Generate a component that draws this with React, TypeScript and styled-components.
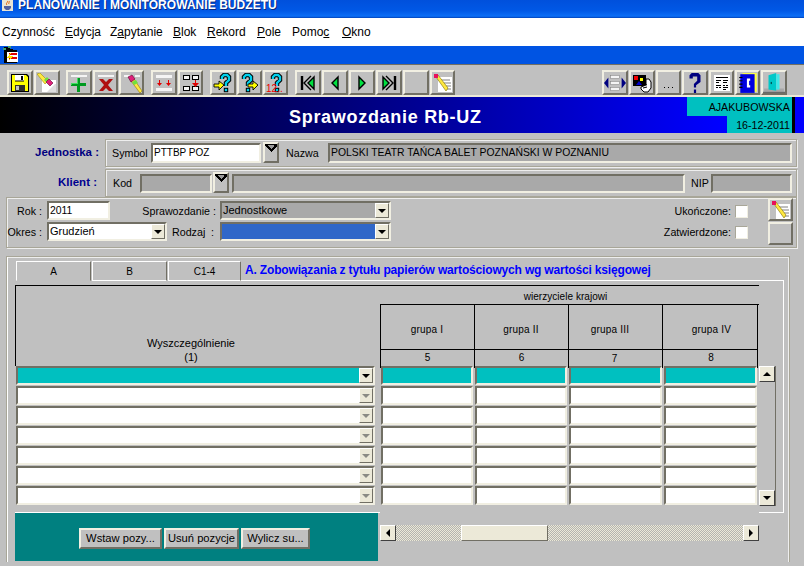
import React from 'react';
import styled, { createGlobalStyle } from 'styled-components';

const GlobalStyle = createGlobalStyle`
	html, body {
		margin: 0;
		padding: 0;
		height: 566px;
		overflow: hidden;
		background: #c0c0c0;
		font-family: "Liberation Sans", Arial, sans-serif;
		font-size: 12px;
		color: #000;
	}
`;

const raised = `
	border-style: solid;
	border-width: 2px;
	border-color: #f1efe2 #716f64 #716f64 #f1efe2;
`;
const sunken = `
	border-style: solid;
	border-width: 2px;
	border-color: #716f64 #f1efe2 #f1efe2 #716f64;
`;

const Screen = styled.div`
	width: 804px;
	height: 566px;
	overflow: hidden;
	display: flex;
	flex-direction: column;
	box-sizing: border-box;
`;

const TitleBar = styled.div`
	height: 18px;
	flex: none;
	display: flex;
	align-items: flex-start;
	padding-left: 2px;
	gap: 5px;
	box-sizing: border-box;
	background: linear-gradient(#0050dc 0, #0058e6 60%, #0b6ef6 90%, #0040b8 100%);
`;
const TitleText = styled.span`
	color: #fff;
	font-weight: bold;
	font-size: 12px;
	line-height: 11px;
	letter-spacing: 0.05px;
	text-shadow: 1px 1px #0a2a80;
`;

const MenuBar = styled.div`
	height: 28px;
	flex: none;
	background: #fff;
	display: flex;
	align-items: center;
	padding-left: 2px;
	box-sizing: border-box;
`;
const MenuItem = styled.span<{ $w: number }>`
	width: ${(p) => p.$w}px;
	flex: none;
	font-size: 12px;
	u { text-underline-offset: 1px; }
`;

const BlueStrip = styled.div`
	height: 18px;
	flex: none;
	background: #0054e3;
	padding-left: 2px;
	box-sizing: border-box;
`;

const Toolbar = styled.div`
	height: 33px;
	flex: none;
	box-sizing: border-box;
	display: flex;
	align-items: flex-start;
	padding: 5px 17px 0 7px;
	border-top: 1px solid #716f64;
	border-bottom: 2px solid #ece9d8;
	background: #c0c0c0;
`;
const ToolGroup = styled.div<{ $after?: number; $push?: boolean }>`
	display: flex;
	gap: 1px;
	margin-right: ${(p) => p.$after ?? 0}px;
	margin-left: ${(p) => (p.$push ? 'auto' : '0')};
`;
const ToolButton = styled.div<{ $w: number }>`
	width: ${(p) => p.$w}px;
	height: 25px;
	box-sizing: border-box;
	${raised}
	background: #c0c0c0;
	display: flex;
	align-items: center;
	justify-content: center;
	overflow: hidden;
	svg { flex: none; }
`;

const Banner = styled.div`
	height: 36px;
	flex: none;
	display: flex;
	background: linear-gradient(90deg, #000 0, #0000ff 720px);
`;
const BannerTitle = styled.div`
	padding: 9px 0 0 289px;
	color: #fff;
	font-weight: bold;
	font-size: 18px;
	line-height: 22px;
	letter-spacing: 0.7px;
`;
const BannerInfo = styled.div`
	margin: 0 9px 0 auto;
	display: flex;
	flex-direction: column;
	align-items: flex-end;
	border-right: 3px solid #000;
`;
const InfoLine = styled.div<{ $w: number; $h: number }>`
	width: ${(p) => p.$w}px;
	height: ${(p) => p.$h}px;
	box-sizing: border-box;
	background: #00c0c0;
	text-align: right;
	padding-right: 2px;
	font-size: 10.7px;
	line-height: ${(p) => p.$h + 1}px;
`;

const FormRow = styled.div<{ $top: number; $h: number }>`
	margin-top: ${(p) => p.$top}px;
	height: ${(p) => p.$h}px;
	flex: none;
	display: flex;
`;
const RowLabel = styled.div<{ $pr: number; $c: string }>`
	width: 105px;
	flex: none;
	box-sizing: border-box;
	padding-right: ${(p) => p.$pr}px;
	text-align: right;
	font-weight: bold;
	font-size: 11.5px;
	line-height: 27px;
	color: ${(p) => p.$c};
`;
const Etched = styled.div`
	box-sizing: border-box;
	border: 1px solid #a8a698;
	box-shadow: inset 1px 1px #eeeeee, 1px 1px #eeeeee;
`;
const RowPanel = styled(Etched)`
	width: 692px;
	flex: none;
	display: flex;
	align-items: center;
	padding-right: 4px;
`;
const Caption = styled.span<{ $w?: number; $ml?: number; $right?: boolean }>`
	flex: none;
	width: ${(p) => (p.$w ? `${p.$w}px` : 'auto')};
	margin-left: ${(p) => p.$ml ?? 0}px;
	text-align: ${(p) => (p.$right ? 'right' : 'left')};
	font-size: 10.7px;
	white-space: nowrap;
`;
const Field = styled.div<{ $w: number; $h?: number; $bg?: string; $ml?: number; $fs?: number }>`
	width: ${(p) => p.$w}px;
	height: ${(p) => p.$h ?? 20}px;
	margin-left: ${(p) => p.$ml ?? 0}px;
	flex: none;
	box-sizing: border-box;
	${sunken}
	background: ${(p) => p.$bg ?? '#a9a9a9'};
	font-size: ${(p) => p.$fs ?? 10.4}px;
	line-height: 15px;
	padding-left: 1px;
	white-space: nowrap;
	overflow: hidden;
`;
const ListButton = styled.div<{ $ml: number; $mt: number }>`
	width: 16px;
	height: 21px;
	margin-left: ${(p) => p.$ml}px;
	margin-top: ${(p) => p.$mt}px;
	flex: none;
	box-sizing: border-box;
	${raised}
	background: #c0c0c0;
	svg { display: block; }
`;

const Filters = styled(Etched)`
	margin: 0 7px 0 6px;
	width: 791px;
	height: 51px;
	flex: none;
	display: flex;
	padding: 3px 3px 0 0;
`;
const FilterLines = styled.div`
	display: flex;
	flex-direction: column;
	gap: 2px;
`;
const FilterLine = styled.div`
	display: flex;
	align-items: center;
	height: 19px;
`;
const Combo = styled.div<{ $w: number; $bg: string; $ml?: number }>`
	width: ${(p) => p.$w}px;
	height: 19px;
	margin-left: ${(p) => p.$ml ?? 0}px;
	flex: none;
	box-sizing: border-box;
	${sunken}
	background: ${(p) => p.$bg};
	display: flex;
	justify-content: space-between;
	font-size: 11px;
	line-height: 15px;
	padding-left: 1px;
`;
const Arrow = styled.div<{ $off?: boolean; $up?: boolean }>`
	width: 14px;
	height: 15px;
	flex: none;
	box-sizing: border-box;
	border-style: solid;
	border-width: 1px;
	border-color: #fff #716f64 #716f64 #fff;
	background: #ece9d8;
	display: flex;
	align-items: center;
	justify-content: center;
	&::after {
		content: '';
		border-left: 4px solid transparent;
		border-right: 4px solid transparent;
		border-top: ${(p) => (p.$up ? '0' : `4px solid ${p.$off ? '#8a8a84' : '#000'}`)};
		border-bottom: ${(p) => (p.$up ? '4px solid #000' : '0')};
	}
`;
const Checks = styled.div`
	margin-left: auto;
	display: flex;
	flex-direction: column;
	align-items: flex-end;
	padding: 3px 20px 0 0;
	gap: 7px;
`;
const CheckLine = styled.div`
	display: flex;
	align-items: center;
	gap: 4px;
	height: 14px;
	font-size: 10.7px;
`;
const CheckBox = styled.div`
	width: 13px;
	height: 13px;
	box-sizing: border-box;
	border: 1px solid;
	border-color: #a8a698 #f1efe2 #f1efe2 #a8a698;
	background: #fff;
`;
const SideButtons = styled.div`
	display: flex;
	flex-direction: column;
	gap: 1px;
	margin-top: -3px;
`;
const SideButton = styled(ToolButton)`
	height: 23px;
`;

const TabPanel = styled(Etched)`
	margin: 8px 0 0 6px;
	width: 784px;
	height: 306px;
	flex: none;
	padding: 4px 0 0 8px;
	box-shadow: inset 1px 0 #fff, inset -1px 0 #eeeeee, inset 0 1px #eeeeee;
	border-bottom: 0;
`;
const TabsRow = styled.div`
	display: flex;
	height: 20px;
	width: 769px;
`;
const TabHead = styled.div<{ $w: number; $on?: boolean }>`
	width: ${(p) => p.$w}px;
	margin-left: 1px;
	flex: none;
	box-sizing: border-box;
	border-top: 1px solid #fff;
	border-left: 1px solid #fff;
	border-right: 1px solid #716f64;
	border-bottom: 1px solid ${(p) => (p.$on ? 'transparent' : '#fff')};
	text-align: center;
	font-size: 10px;
	line-height: 20px;
`;
const TabTitle = styled.div`
	flex: 1;
	padding-left: 4px;
	box-sizing: border-box;
	border-bottom: 1px solid #fff;
	color: #0000ff;
	font-weight: bold;
	font-size: 12px;
	line-height: 18px;
	letter-spacing: -0.17px;
	white-space: nowrap;
`;
const TabPage = styled.div`
	width: 769px;
	height: 231px;
	box-sizing: border-box;
	padding-top: 4px;
	border-right: 1px solid #fff;
`;
const TableHead = styled.div`
	width: 744px;
	height: 81px;
	display: flex;
	box-sizing: border-box;
	border-top: 1px solid #000;
	border-left: 1px solid #000;
`;
const FirstHead = styled.div`
	width: 364px;
	flex: none;
	box-sizing: border-box;
	padding: 50px 14px 0 0;
	text-align: center;
	font-size: 11px;
	line-height: 14px;
`;
const GroupHead = styled.div`
	flex: 1;
	display: flex;
	flex-direction: column;
`;
const GroupTitle = styled.div`
	height: 19px;
	box-sizing: border-box;
	border-bottom: 1px solid #000;
	padding-right: 8px;
	text-align: center;
	font-size: 10px;
	line-height: 21px;
	letter-spacing: 0.05px;
`;
const GroupColumns = styled.div`
	display: flex;
	flex: 1;
`;
const GroupColumn = styled.div<{ $w: number }>`
	width: ${(p) => p.$w}px;
	flex: none;
	box-sizing: border-box;
	border-left: 1px solid #000;
	display: flex;
	flex-direction: column;
	&:last-child {
		border-right: 1px solid #000;
	}
`;
const GroupName = styled.div<{ $shift: number }>`
	height: 45px;
	box-sizing: border-box;
	border-bottom: 1px solid #000;
	margin-right: -1px;
	text-align: center;
	font-size: 10px;
	line-height: 49px;
	letter-spacing: 0.2px;
	padding-left: ${(p) => Math.max(p.$shift, 0)}px;
	padding-right: ${(p) => Math.max(-p.$shift, 0)}px;
`;
const GroupNum = styled.div<{ $lh: number; $shift: number }>`
	text-align: center;
	font-size: 10px;
	line-height: ${(p) => p.$lh}px;
	padding-left: ${(p) => Math.max(p.$shift, 0)}px;
	padding-right: ${(p) => Math.max(-p.$shift, 0)}px;
`;
const TableBody = styled.div`
	display: flex;
	padding-left: 1px;
`;
const Rows = styled.div`
	display: flex;
	flex-direction: column;
`;
const DataRow = styled.div`
	height: 20px;
	display: grid;
	grid-template-columns: 363px 92px 92px 93px 93px;
	column-gap: 2px;
	& > :first-child {
		width: 359px;
	}
`;
const Cell = styled.div<{ $on: boolean }>`
	height: 19px;
	box-sizing: border-box;
	${sunken}
	background: ${(p) => (p.$on ? '#00c0c0' : '#fff')};
	display: flex;
	justify-content: flex-end;
`;
const VScroll = styled.div`
	margin-left: 2px;
	width: 17px;
	height: 140px;
	box-sizing: border-box;
	border-right: 1px solid #716f64;
	display: flex;
	flex-direction: column;
	justify-content: space-between;
`;
const ScrollButton = styled(Arrow)`
	width: 16px;
	height: 16px;
	border-color: #fff #404040 #404040 #fff;
`;
const RuleLine = styled.div`
	display: flex;
	height: 1px;
`;
const Rule = styled.div<{ $w: number; $ml?: number }>`
	width: ${(p) => p.$w}px;
	margin-left: ${(p) => p.$ml ?? 0}px;
	background: #fff;
`;
const Footer = styled.div`
	display: flex;
`;
const ActionBar = styled.div`
	width: 363px;
	height: 48px;
	flex: none;
	background: #008080;
	display: flex;
	gap: 2px;
	padding: 15px 0 0 64px;
	box-sizing: border-box;
`;
const ActionButton = styled.div<{ $w: number }>`
	width: ${(p) => p.$w}px;
	height: 21px;
	box-sizing: border-box;
	${raised}
	background: #c0c0c0;
	text-align: center;
	font-size: 11.2px;
	line-height: 17px;
	white-space: nowrap;
`;
const HScroll = styled.div`
	margin: 12px 0 0 2px;
	width: 379px;
	height: 16px;
	display: flex;
	background: repeating-conic-gradient(#ece9d8 0 25%, #b4b4b0 0 50%) 0 0 / 2px 2px;
`;
const SideArrow = styled.div<{ $left?: boolean }>`
	width: 16px;
	height: 16px;
	flex: none;
	box-sizing: border-box;
	border: 1px solid;
	border-color: #fff #404040 #404040 #fff;
	background: #ece9d8;
	display: flex;
	align-items: center;
	justify-content: center;
	&::after {
		content: '';
		border-top: 4px solid transparent;
		border-bottom: 4px solid transparent;
		border-left: ${(p) => (p.$left ? '0' : '4px solid #000')};
		border-right: ${(p) => (p.$left ? '4px solid #000' : '0')};
	}
`;
const Thumb = styled.div`
	width: 87px;
	margin-left: 65px;
	margin-right: auto;
	box-sizing: border-box;
	border: 1px solid;
	border-color: #fff #716f64 #716f64 #fff;
	background: #ece9d8;
`;

// toolbar drawings, all on the same 20x20 grid
const Ico = ({ children, size = 20 }: { children: React.ReactNode; size?: number }) => (
	<svg width={size} height={size} viewBox="0 0 20 20">
		{children}
	</svg>
);

const Floppy = () => (
	<Ico>
		<path d="M1 1h16l2 2v16H1z" fill="#000" />
		<path d="M2 2h14l2 2v14H2z" fill="#ffff00" />
		<rect x="5" y="2" width="9" height="6" fill="#fff" />
		<rect x="11" y="3" width="2" height="4" fill="#000" />
		<path d="M5 8h9" stroke="#000" />
		<rect x="5" y="12" width="10" height="6" fill="#303030" />
		<rect x="6" y="13" width="3" height="4" fill="#c0c0c0" />
	</Ico>
);
const ClearForm = () => (
	<Ico>
		<rect x="5" y="7" width="14" height="12" fill="#fff" />
		<path d="M18 11l-8 8h9v-8z" fill="#dedede" />
		<path d="M0 1l3-1 8 8-3 3z" fill="#ffe840" stroke="#a09000" strokeWidth="0.6" />
		<path d="M7 7l3-3 2 2-3 3z" fill="#70e040" />
		<path d="M9 9l3-3 4 4-3 3z" fill="#e0207a" stroke="#600030" strokeWidth="0.6" />
	</Ico>
);
const Bar = ({ y = 2, x = 3, w = 16 }: { y?: number; x?: number; w?: number }) => (
	<rect x={x} y={y} width={w} height="2" fill="#f4f4f4" />
);
const AddRow = () => (
	<Ico>
		<Bar x={2} />
		<path d="M8 5h3v5h6v3h-6v6H8v-6H2v-3h6z" fill="#009a20" />
		<path d="M8 5h1v6H3v1H2v-2h6z" fill="#40e060" />
	</Ico>
);
const DeleteRow = () => (
	<Ico>
		<Bar x={2} />
		<path d="M3 6h4l3 3 3-3h4l-5 6 5 6h-4l-3-3-3 3H3l5-6z" fill="#b01010" />
	</Ico>
);
const ClearRow = () => (
	<Ico>
		<Bar x={2} w={7} />
		<Bar x={13} w={5} />
		<path d="M9 8l3-2 8 12-2 2z" fill="#ffe840" stroke="#907800" strokeWidth="0.6" />
		<path d="M10 9l4-2 2 3-4 2z" fill="#70e040" />
		<path d="M6 4l4-2 3 4-4 3z" fill="#e0207a" stroke="#600030" strokeWidth="0.6" />
	</Ico>
);
const Duplicate = () => (
	<Ico>
		<rect x="2" y="2" width="16" height="3" fill="#f4f4f4" />
		<rect x="2" y="15" width="16" height="3" fill="#f4f4f4" />
		<path d="M5 7h1v3h2l-2.500 3L3 10h2zM14 7h1v3h2l-2.500 3L12 10h2z" fill="#e00000" />
	</Ico>
);
const DuplicateGrid = () => (
	<Ico>
		<g fill="#f4f4f4" stroke="#000" strokeWidth="1">
			<rect x="2.500" y="2.500" width="6" height="4" />
			<rect x="11.500" y="2.500" width="6" height="4" />
			<rect x="2.500" y="13.500" width="6" height="4" />
			<rect x="11.500" y="13.500" width="6" height="4" />
		</g>
		<path d="M14 7h1v3h3l-3.500 4L11 10h3z" fill="#e00000" />
	</Ico>
);
const QMark = ({ x = 0 }: { x?: number }) => (
	<g transform={`translate(${x} 0)`}>
		<path d="M6 6V4l2-2h3l2 2v3l-3 3v3" fill="none" stroke="#000" strokeWidth="4.400" />
		<rect x="7.800" y="14.800" width="4.400" height="4.400" fill="#000" />
		<path d="M6 6V4l2-2h3l2 2v3l-3 3v3" fill="none" stroke="#00d0ec" strokeWidth="2.400" />
		<rect x="8.800" y="15.800" width="2.400" height="2.400" fill="#00d0ec" />
	</g>
);
const QueryEnter = () => (
	<Ico>
		<QMark x={3} />
		<path d="M1 11h5V8l5 4-5 5v-3H1z" fill="#ffff00" stroke="#000" strokeWidth="0.9" />
	</Ico>
);
const QueryRun = () => (
	<Ico>
		<QMark x={-2} />
		<path d="M8 11h5V8l5 4-5 5v-3H8z" fill="#ffff00" stroke="#000" strokeWidth="0.9" />
	</Ico>
);
const QueryCount = () => (
	<Ico>
		<QMark x={1} />
		<text x="0" y="19" fontSize="10" fill="#f00000" fontFamily="Liberation Sans, sans-serif">
			12..
		</text>
	</Ico>
);
const NavIcon = ({ dir, stop }: { dir: 'l' | 'r'; stop?: boolean }) => (
	<Ico>
		{dir === 'l' ? (
			<g stroke="#000" strokeWidth="1.400">
				{stop && <path d="M4 3v14" fill="none" strokeWidth="2.400" />}
				{stop && <path d="M13 3L6 10l7 7" fill="none" />}
				<path d={stop ? 'M16 4L10 10l6 6z' : 'M13 4L7 10l6 6z'} fill="#00e040" />
			</g>
		) : (
			<g stroke="#000" strokeWidth="1.400">
				{stop && <path d="M16 3v14" fill="none" strokeWidth="2.400" />}
				{stop && <path d="M7 3l7 7-7 7" fill="none" />}
				<path d={stop ? 'M4 4l6 6-6 6z' : 'M7 4l6 6-6 6z'} fill="#00e040" />
			</g>
		)}
	</Ico>
);
const Notes = () => (
	<Ico>
		<rect x="5" y="4" width="14" height="15" fill="#fff" />
		<path d="M8 7h9M10 10h8M12 13h6M13 16h5" stroke="#808080" strokeWidth="1" />
		<path d="M3 4l2-2 10 13-2 3z" fill="#ffe840" stroke="#807000" strokeWidth="0.6" />
		<rect x="1" y="1" width="4" height="4" fill="#e8105a" />
	</Ico>
);
const RecordSize = () => (
	<Ico size={22}>
		<path d="M0 10l4-5v10z" fill="#000080" />
		<path d="M20 10l-4-5v10z" fill="#000080" />
		<rect x="6" y="3" width="8" height="3" fill="#f4f4f4" stroke="#808080" strokeWidth="0.5" />
		<rect x="6" y="8.500" width="8" height="3" fill="#f4f4f4" stroke="#808080" strokeWidth="0.5" />
		<rect x="6" y="14" width="8" height="3" fill="#f4f4f4" stroke="#808080" strokeWidth="0.5" />
	</Ico>
);
const Palette = () => (
	<Ico>
		<rect x="1" y="2" width="13" height="11" fill="#000" />
		<rect x="2" y="3" width="4" height="4" fill="#f00000" />
		<rect x="8" y="5" width="3" height="3" fill="#ffff00" />
		<path d="M4 12l3-4 3 4z" fill="#0000d0" />
		<path d="M14 6h3l2 3v6l-3 4h-4l-3-3v-2l5-2z" fill="#fff" stroke="#000" strokeWidth="1" />
		<path d="M12 11l3 1M11 15l4-1" stroke="#000" strokeWidth="1" />
	</Ico>
);
const Help = () => (
	<Ico size={22}>
		<path d="M5 6V3l2-2h6l2 2v6l-4 3v2H9v-3l3-3V4H8v2zM9 16h2v3H9z" fill="#000080" />
	</Ico>
);
const KeyMap = () => (
	<Ico>
		<rect x="2" y="2" width="16" height="16" fill="#fff" />
		<path
			d="M4 4h12v1H4zM4 7h5v1H4zM11 7h5v1h-5zM4 9h3v1H4zM11 9h4v1h-4zM4 12h5v1H4zM11 12h2v1h-2zM14 12h2v1h-2zM4 14h2v1H4zM7 14h2v1H7zM11 14h5v1h-5zM11 16h3v1h-3z"
			fill="#000"
		/>
	</Ico>
);
const Book = () => (
	<Ico size={22}>
		<rect x="5" y="1" width="13" height="17" fill="#ffff40" />
		<rect x="3" y="2" width="13" height="17" fill="#0000e0" />
		<path d="M12 6H9v8h3v-2h-1V8h1z" fill="#fff" />
		<path d="M2 5h3M2 8h3M2 11h3M2 14h3" stroke="#000" strokeWidth="1" />
	</Ico>
);
const Door = () => (
	<Ico size={22}>
		<rect x="1" y="15" width="18" height="3" fill="#a8a8a8" />
		<rect x="0" y="18" width="20" height="1" fill="#606060" />
		<path d="M5 3l7-2v16l-7-1z" fill="#00c8c8" />
		<path d="M12 2h3v14h-3z" fill="#40e8e8" />
		<rect x="7" y="9" width="1" height="2" fill="#004040" />
	</Ico>
);
const Empty = () => null;
const Dots = () => (
	<svg width="20" height="20" viewBox="0 0 20 20" shapeRendering="crispEdges">
		<path d="M5 14h1v1H5zM9 14h1v1H9zM13 14h1v1h-1z" fill="#000" />
	</svg>
);
const LovMark = () => (
	<svg width="12" height="9" viewBox="0 0 12 9" shapeRendering="crispEdges">
		<path d="M0 0h12v2l-6 6-6-6z" fill="#000" />
		<path d="M3 1h6v1L6 5 3 2z" fill="#9a9a9a" />
	</svg>
);
const JavaMark = () => (
	<svg width="11" height="11" viewBox="0 0 11 11">
		<rect width="11" height="11" fill="#e8e4d4" />
		<path d="M5 1c2 1-2 2 0 4M7 1c1 1-1 2 0 3" stroke="#e06000" fill="none" />
		<path d="M2 6h7v2l-2 2H4L2 8z" fill="#5060a0" />
	</svg>
);
const FormsMark = () => (
	<svg width="17" height="18" viewBox="0 0 17 18" shapeRendering="crispEdges">
		<path d="M2 1h6v2h3v14H2z" fill="#000" />
		<rect x="3" y="4" width="12" height="13" fill="#000" />
		<rect x="5" y="6" width="11" height="10" fill="#fff" />
		<path d="M7 7h8v2H7zM7 11h8v2H7z" fill="#e00000" />
		<path d="M9 6L5 12h3l-2 4 5-6H8z" fill="#ffe000" />
		<path d="M1 2h3v2H1zM6 0h3v2H6z" fill="#40a070" />
	</svg>
);

const menu: [string, string, string, number][] = [
	['', '', 'Czynność', 63],
	['', 'E', 'dycja', 45],
	['Z', 'a', 'pytanie', 63],
	['', 'B', 'lok', 34],
	['', 'R', 'ekord', 50],
	['', 'P', 'ole', 35],
	['Pomo', 'c', '', 50],
	['', 'O', 'kno', 30],
];

const toolbar: { after?: number; push?: boolean; items: [React.FC, number][] }[] = [
	{ after: 6, items: [[Floppy, 26], [ClearForm, 26]] },
	{ after: 7, items: [[AddRow, 26], [DeleteRow, 25], [ClearRow, 25]] },
	{ after: 7, items: [[Duplicate, 26], [DuplicateGrid, 25]] },
	{ after: 7, items: [[QueryEnter, 26], [QueryRun, 25], [QueryCount, 25]] },
	{
		items: [
			[() => <NavIcon dir="l" stop />, 26],
			[() => <NavIcon dir="l" />, 26],
			[() => <NavIcon dir="r" />, 26],
			[() => <NavIcon dir="r" stop />, 26],
			[Empty, 26],
			[Notes, 25],
		],
	},
	{
		push: true,
		items: [[RecordSize, 26], [Palette, 26], [Dots, 25], [Help, 26], [KeyMap, 25], [Book, 25], [Door, 26]],
	},
];

const groups = [
	{ name: 'grupa I', num: '5', w: 94, nameShift: -2, numShift: 0, lh: 15 },
	{ name: 'grupa II', num: '6', w: 94, nameShift: -2, numShift: 0, lh: 15 },
	{ name: 'grupa III', num: '7', w: 94, nameShift: -12, numShift: -2, lh: 18 },
	{ name: 'grupa IV', num: '8', w: 96, nameShift: 2, numShift: 2, lh: 15 },
];

const rows = [true, false, false, false, false, false, false];

const App = () => {
	return (
		<Screen>
			<GlobalStyle />
			<TitleBar>
				<JavaMark />
				<TitleText>PLANOWANIE I MONITOROWANIE BUDŻETU</TitleText>
			</TitleBar>
			<MenuBar>
				{menu.map(([a, u, b, w]) => (
					<MenuItem key={a + u + b} $w={w}>
						{a}
						{u && <u>{u}</u>}
						{b}
					</MenuItem>
				))}
			</MenuBar>
			<BlueStrip>
				<FormsMark />
			</BlueStrip>
			<Toolbar>
				{toolbar.map((g, i) => (
					<ToolGroup key={i} $after={g.after} $push={g.push}>
						{g.items.map(([Icon, w], j) => (
							<ToolButton key={j} $w={w}>
								<Icon />
							</ToolButton>
						))}
					</ToolGroup>
				))}
			</Toolbar>
			<Banner>
				<BannerTitle>Sprawozdanie Rb-UZ</BannerTitle>
				<BannerInfo>
					<InfoLine $w={105} $h={19}>AJAKUBOWSKA</InfoLine>
					<InfoLine $w={65} $h={17}>16-12-2011</InfoLine>
				</BannerInfo>
			</Banner>

			<FormRow $top={6} $h={28}>
				<RowLabel $pr={6} $c="#000080">Jednostka :</RowLabel>
				<RowPanel>
					<Caption $ml={6} $w={39}>Symbol</Caption>
					<Field $w={110} $bg="#fff" $fs={10}>PTTBP POZ</Field>
					<ListButton $ml={2} $mt={-1}><LovMark /></ListButton>
					<Caption $ml={7} $w={42}>Nazwa</Caption>
					<Field $w={464}>POLSKI TEATR TAŃCA BALET POZNAŃSKI W POZNANIU</Field>
				</RowPanel>
			</FormRow>
			<FormRow $top={2} $h={28}>
				<RowLabel $pr={8} $c="#000090">Klient :</RowLabel>
				<RowPanel>
					<Caption $ml={7} $w={27}>Kod</Caption>
					<Field $w={72} $h={19} />
					<ListButton $ml={1} $mt={-1}><LovMark /></ListButton>
					<Field $w={453} $h={19} $ml={3} />
					<Caption $ml={6} $w={20}>NIP</Caption>
					<Field $w={81} $h={19} />
				</RowPanel>
			</FormRow>

			<Filters>
				<FilterLines>
					<FilterLine>
						<Caption $w={35} $right>Rok :</Caption>
						<Field $w={63} $h={19} $bg="#fff" $ml={5}>2011</Field>
						<Caption $w={106} $right>Sprawozdanie :</Caption>
						<Combo $w={171} $bg="#a9a9a9" $ml={4}>
							Jednostkowe
							<Arrow />
						</Combo>
					</FilterLine>
					<FilterLine>
						<Caption $w={35} $right>Okres :</Caption>
						<Combo $w={120} $bg="#fff" $ml={5}>
							Grudzień
							<Arrow />
						</Combo>
						<Caption $ml={5} $w={39}>Rodzaj</Caption>
						<Caption $w={9}>:</Caption>
						<Combo $w={171} $bg="#3067c8">
							<span />
							<Arrow />
						</Combo>
					</FilterLine>
				</FilterLines>
				<Checks>
					<CheckLine>
						Ukończone:
						<CheckBox />
					</CheckLine>
					<CheckLine>
						Zatwierdzone:
						<CheckBox />
					</CheckLine>
				</Checks>
				<SideButtons>
					<SideButton $w={25}><Notes /></SideButton>
					<SideButton $w={25} />
				</SideButtons>
			</Filters>

			<TabPanel>
				<TabsRow>
					<TabHead $w={75} $on>A</TabHead>
					<TabHead $w={75}>B</TabHead>
					<TabHead $w={73}>C1-4</TabHead>
					<TabTitle>A. Zobowiązania z tytułu papierów wartościowych wg wartości księgowej</TabTitle>
				</TabsRow>
				<TabPage>
					<TableHead>
						<FirstHead>
							Wyszczególnienie
							<br />
							(1)
						</FirstHead>
						<GroupHead>
							<GroupTitle>wierzyciele krajowi</GroupTitle>
							<GroupColumns>
								{groups.map((g) => (
									<GroupColumn key={g.name} $w={g.w}>
										<GroupName $shift={g.nameShift}>{g.name}</GroupName>
										<GroupNum $lh={g.lh} $shift={g.numShift}>{g.num}</GroupNum>
									</GroupColumn>
								))}
							</GroupColumns>
						</GroupHead>
					</TableHead>
					<TableBody>
						<Rows>
							{rows.map((on, i) => (
								<DataRow key={i}>
									<Cell $on={on}>
										<Arrow $off={!on} />
									</Cell>
									<Cell $on={on} />
									<Cell $on={on} />
									<Cell $on={on} />
									<Cell $on={on} />
								</DataRow>
							))}
						</Rows>
						<VScroll>
							<ScrollButton $up />
							<ScrollButton />
						</VScroll>
					</TableBody>
				</TabPage>
				<RuleLine>
					<Rule $w={365} />
					<Rule $w={25} $ml={379} />
				</RuleLine>
				<Footer>
					<ActionBar>
						<ActionButton $w={83}>Wstaw pozy...</ActionButton>
						<ActionButton $w={75}>Usuń pozycje</ActionButton>
						<ActionButton $w={69}>Wylicz su...</ActionButton>
					</ActionBar>
					<HScroll>
						<SideArrow $left />
						<Thumb />
						<SideArrow />
					</HScroll>
				</Footer>
			</TabPanel>
		</Screen>
	);
};

export default App;
